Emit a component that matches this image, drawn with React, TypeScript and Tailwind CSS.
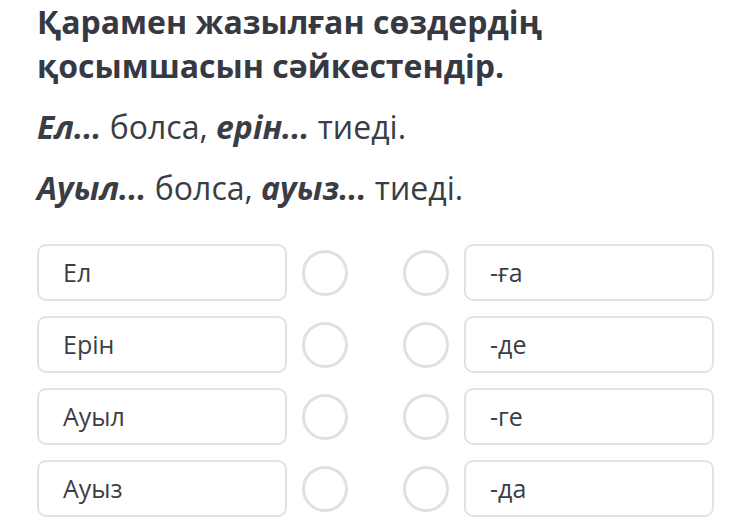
import React from "react";

const left = ["Ел", "Ерін", "Ауыл", "Ауыз"];
const right = ["-ға", "-де", "-ге", "-да"];

function Circle() {
  return <div className="w-[46px] h-[46px] rounded-full border-[3px] border-[#dfe0e5] bg-white shrink-0" />;
}

function Box({ text }: { text: string }) {
  return (
    <div className="w-[250px] h-[57px] rounded-[9px] border-2 border-[#e3e3e6] bg-white flex items-center pl-[24px] text-[25px] text-[#3b3e46] shrink-0">
      {text}
    </div>
  );
}

export default function App() {
  return (
    <div
      className="w-[750px] h-[530px] bg-white overflow-hidden pl-[37px] text-[#3a3d45]"
      style={{ fontFamily: '"Open Sans", "Noto Sans", sans-serif' }}
    >
      <h1 className="text-[32px] font-bold leading-[44px] text-[#363941]">
        Қарамен жазылған сөздердің
        <br />
        қосымшасын сәйкестендір.
      </h1>
      <p className="text-[32px] leading-[44px] mt-[17px]">
        <b className="italic">Ел...</b> болса, <b className="italic">ерін...</b> тиеді.
      </p>
      <p className="text-[32px] leading-[44px] mt-[17px]">
        <b className="italic">Ауыл...</b> болса, <b className="italic">ауыз...</b> тиеді.
      </p>
      <div className="mt-[34px] flex flex-col gap-[15px]">
        {left.map((l, i) => (
          <div key={i} className="flex items-center">
            <Box text={l} />
            <div className="ml-[15px]">
              <Circle />
            </div>
            <div className="ml-[55px]">
              <Circle />
            </div>
            <div className="ml-[15px]">
              <Box text={right[i]} />
            </div>
          </div>
        ))}
      </div>
    </div>
  );
}
